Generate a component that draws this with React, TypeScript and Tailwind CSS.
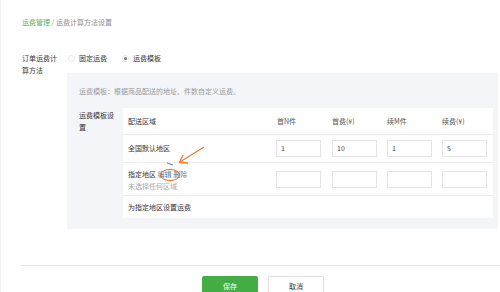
import React from "react";

const font = { fontFamily: '"Noto Sans CJK SC", "Noto Sans", sans-serif' };

function Radio({ checked }: { checked?: boolean }) {
  return (
    <span className="w-[7px] h-[7px] rounded-full border border-[#e4e4e4] bg-white flex items-center justify-center">
      {checked && <span className="w-[3px] h-[3px] rounded-full bg-[#777]" />}
    </span>
  );
}

function Input({ value }: { value?: string }) {
  return (
    <div className="w-[45px] h-[17px] border border-[#e4e4e8] bg-white flex items-center pl-[4px] text-[7px] text-[#444]">
      {value}
    </div>
  );
}

export default function App() {
  return (
    <div
      className="w-[500px] h-[292px] bg-white overflow-hidden relative text-[#353535] border-l border-[#f0f0f0]"
      style={font}
    >
      <div className="pt-[17px] pl-[21px] text-[7px] leading-[10px]">
        <span className="text-[#5cae5c]">运费管理</span>
        <span className="text-[#8d8d8d]"> / 运费计算方法设置</span>
      </div>

      <div className="flex mt-[25px] pl-[21px] text-[7px] leading-[12px]">
        <div className="w-[46px]">
          订单运费计
          <br />
          算方法
        </div>
        <div className="flex items-center gap-[4px] h-[12px]">
          <Radio />
          <span className="mr-[11px]">固定运费</span>
          <Radio checked />
          <span>运费模板</span>
        </div>
      </div>

      <div className="ml-[66px] mr-[2px] mt-[-3px] bg-[#f4f5f9] pt-[13px] pb-[11px] pl-[12px] pr-[5px]">
        <div className="text-[7px] leading-[10px] text-[#9a9a9a]">
          运费模板：根据商品配送的地址、件数自定义运费。
        </div>
        <div className="flex mt-[12px]">
          <div className="w-[44px] text-[7px] leading-[12px] pt-[1px]">
            运费模板设
            <br />置
          </div>
          <div className="flex-1 bg-white text-[7px]">
            <div className="grid grid-cols-[153px_56px_55px_55px_50px] h-[27px] items-center border-b border-[#ececf0]">
              <div className="pl-[5px]">配送区域</div>
              <div className="pl-[1px] text-[#555]">首N件</div>
              <div className="text-[#555]">首费(¥)</div>
              <div className="text-[#555]">续M件</div>
              <div className="text-[#555]">续费(¥)</div>
            </div>
            <div className="grid grid-cols-[153px_56px_55px_55px_50px] h-[28px] items-center border-b border-[#ececf0]">
              <div className="pl-[5px]">全国默认地区</div>
              <Input value="1" />
              <Input value="10" />
              <Input value="1" />
              <Input value="5" />
            </div>
            <div className="grid grid-cols-[153px_56px_55px_55px_50px] h-[33px] items-center border-b border-[#ececf0]">
              <div className="pl-[5px] leading-[12px] pt-[2px]">
                <div>
                  指定地区 <span className="text-[#5b7fb0]">编辑</span>{" "}
                  <span className="text-[#5b7fb0]">删除</span>
                </div>
                <div className="text-[#a8a8a8]">未选择任何区域</div>
              </div>
              <Input />
              <Input />
              <Input />
              <Input />
            </div>
            <div className="h-[22px] flex items-center pl-[5px]">为指定地区设置运费</div>
          </div>
        </div>
      </div>

      <div className="ml-[20px] mt-[36px] border-t border-[#e7e7eb]" />

      <div className="flex gap-[10px] mt-[10px] pl-[201px]">
        <div className="w-[56px] h-[20px] bg-[#44ad44] rounded-[2px] text-white text-[7px] flex items-center justify-center">
          保存
        </div>
        <div className="w-[56px] h-[20px] bg-white border border-[#e0e0e0] rounded-[2px] text-[7px] flex items-center justify-center">
          取消
        </div>
      </div>

      <svg className="absolute left-0 top-0 pointer-events-none" width="500" height="292">
        <ellipse cx="169" cy="175" rx="9.5" ry="5.5" fill="none" stroke="#e06a1e" strokeWidth="1" />
        <line x1="203" y1="147" x2="179" y2="162" stroke="#f07a2a" strokeWidth="1.3" />
        <polyline points="182,155 178.5,162.5 187,163" fill="none" stroke="#f07a2a" strokeWidth="1.3" />
        <line x1="166" y1="163" x2="172" y2="165" stroke="#555" strokeWidth="0.8" />
      </svg>
    </div>
  );
}
